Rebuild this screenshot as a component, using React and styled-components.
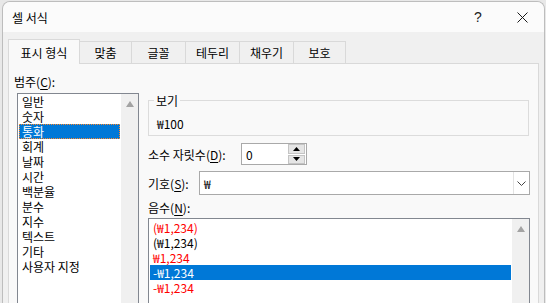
import React from 'react'
import styled, { createGlobalStyle } from 'styled-components'

const GlobalStyle = createGlobalStyle`
    html, body {
        margin: 0;
        padding: 0;
    }
    body {
        background: #e8e8e8;
        font-family: "Malgun Gothic", "Noto Sans CJK KR", sans-serif;
        font-size: 12px;
        color: #000;
        overflow: hidden;
    }
`

const Window = styled.div`
    margin: 1px 0 0 2px;
    width: 543px;
    height: 302px;
    box-sizing: border-box;
    border: 1px solid #bdbdbd;
    border-bottom: none;
    border-radius: 8px 8px 0 0;
    background: #f0f0f0;
    overflow: hidden;
    display: flex;
    flex-direction: column;
`

const TitleBar = styled.div`
    height: 30px;
    flex: none;
    display: flex;
    align-items: center;
    background: #fbfbfb;
`

const TitleText = styled.div`
    flex: 1;
    padding-left: 9px;
    line-height: 15px;
`

const TitleButton = styled.div`
    width: 44px;
    height: 30px;
    display: flex;
    align-items: center;
    justify-content: center;
    font-family: "Liberation Sans", sans-serif;
    font-size: 14px;
    color: #222;
`

const Body = styled.div`
    flex: 1;
    min-height: 0;
    display: flex;
    flex-direction: column;
    padding: 7px 5px 0 5px;
`

const TabRow = styled.div`
    display: flex;
    align-items: flex-end;
    height: 24px;
    flex: none;
    position: relative;
    z-index: 1;
`

const Tab = styled.div`
    width: ${p => p.w}px;
    height: ${p => (p.active ? 25 : 22)}px;
    margin-bottom: ${p => (p.active ? -1 : 0)}px;
    box-sizing: border-box;
    border: 1px solid #d9d9d9;
    border-bottom: none;
    border-left: ${p => (p.first ? '1px solid #d9d9d9' : 'none')};
    background: ${p => (p.active ? '#f9f9f9' : '#f0f0f0')};
    display: flex;
    align-items: center;
    justify-content: center;
    line-height: 15px;
`

const Panel = styled.div`
    flex: 1;
    min-height: 0;
    overflow: hidden;
    border: 1px solid #d9d9d9;
    border-bottom: none;
    background: #f9f9f9;
    display: flex;
    padding: 10px 0 0 5px;
`

const LeftCol = styled.div`
    width: 125px;
    display: flex;
    flex-direction: column;
`

const RightCol = styled.div`
    width: 382px;
    margin-left: 9px;
    display: flex;
    flex-direction: column;
`

const Label = styled.div`
    line-height: 15px;
    height: 15px;
    white-space: nowrap;
    width: ${p => (p.w ? `${p.w}px` : 'auto')};
    flex: none;
`

const U = styled.span`
    text-decoration: underline;
    text-underline-offset: 2px;
`

const ListBox = styled.div`
    margin-top: ${p => p.mt}px;
    margin-left: ${p => p.ml || 0}px;
    width: ${p => p.w}px;
    height: ${p => p.h}px;
    flex: none;
    box-sizing: border-box;
    border: 1px solid #828790;
    background: #fff;
    display: flex;
`

const Items = styled.div`
    flex: 1;
    padding: ${p => p.pt || 0}px 1px 0 1px;
`

const Item = styled.div`
    height: 15px;
    line-height: 15px;
    padding-left: 3px;
    box-sizing: border-box;
    white-space: nowrap;
    color: ${p => (p.selected ? '#fff' : p.red ? '#ff0000' : '#000')};
    background: ${p => (p.selected ? '#0078d7' : 'transparent')};
    outline: ${p => (p.focus ? '1px dotted #ff8728' : 'none')};
    outline-offset: -1px;
`

const ScrollBar = styled.div`
    width: 17px;
    background: #f0f0f0;
    display: flex;
    justify-content: center;
    padding-top: 7px;
    box-sizing: border-box;
`

const GroupBox = styled.fieldset`
    margin: 19px 0 0 0;
    padding: 0 8px 4px 8px;
    width: 381px;
    box-sizing: border-box;
    border: 1px solid #dcdcdc;
    min-width: 0;
`

const Legend = styled.legend`
    margin-left: -3px;
    padding: 0 2px;
    line-height: 15px;
`

const Preview = styled.div`
    margin-top: 8px;
    line-height: 15px;
`

const FieldRow = styled.div`
    display: flex;
    align-items: center;
    margin-top: ${p => p.mt}px;
`

const SpinBox = styled.div`
    width: 66px;
    height: 22px;
    box-sizing: border-box;
    border: 1px solid #a9a9a9;
    background: #fff;
    display: flex;
    align-items: center;
`

const FieldText = styled.div`
    flex: 1;
    padding-left: 4px;
    line-height: 15px;
`

const SpinButtons = styled.div`
    width: 17px;
    height: 20px;
    display: flex;
    flex-direction: column;
    gap: 1px;
    margin-right: 1px;
`

const SpinButton = styled.div`
    flex: 1;
    background: #e5e5e5;
    border: 1px solid #c4c4c4;
    display: flex;
    align-items: center;
    justify-content: center;
`

const Combo = styled.div`
    width: 331px;
    height: 24px;
    box-sizing: border-box;
    border: 1px solid #a9a9a9;
    background: #fff;
    display: flex;
    align-items: center;
`

const DropButton = styled.div`
    width: 16px;
    height: 22px;
    box-sizing: border-box;
    border-left: 1px solid #e3e3e3;
    display: flex;
    align-items: center;
    justify-content: center;
`

const ArrowUp = ({ color = '#a3a3a3', w = 8, h = 6 }) => (
    <svg width={w} height={h} viewBox={`0 0 ${w} ${h}`}>
        <polygon points={`0,${h} ${w / 2},0 ${w},${h}`} fill={color} />
    </svg>
)

const ArrowDown = ({ color = '#000', w = 6, h = 3 }) => (
    <svg width={w} height={h} viewBox={`0 0 ${w} ${h}`}>
        <polygon points={`0,0 ${w},0 ${w / 2},${h}`} fill={color} />
    </svg>
)

const categories = [
    '일반', '숫자', '통화', '회계', '날짜', '시간',
    '백분율', '분수', '지수', '텍스트', '기타', '사용자 지정'
]

const negatives = [
    { text: '(₩1,234)', red: true },
    { text: '(₩1,234)' },
    { text: '₩1,234', red: true },
    { text: '-₩1,234', selected: true },
    { text: '-₩1,234', red: true }
]

const tabs = [
    { label: '표시 형식', w: 72 },
    { label: '맞춤', w: 52 },
    { label: '글꼴', w: 54 },
    { label: '테두리', w: 54 },
    { label: '채우기', w: 54 },
    { label: '보호', w: 52 }
]

const App = () => (
    <>
        <GlobalStyle />
        <Window>
            <TitleBar>
                <TitleText>셀 서식</TitleText>
                <TitleButton>?</TitleButton>
                <TitleButton>
                    <svg width="11" height="11" viewBox="0 0 11 11">
                        <path d="M0.5 0.5 L10.5 10.5 M10.5 0.5 L0.5 10.5" stroke="#1a1a1a" strokeWidth="1" />
                    </svg>
                </TitleButton>
            </TitleBar>
            <Body>
                <TabRow>
                    {tabs.map((t, i) => (
                        <Tab key={t.label} w={t.w} active={i === 0} first={i === 0}>
                            {t.label}
                        </Tab>
                    ))}
                </TabRow>
                <Panel>
                    <LeftCol>
                        <Label>범주(<U>C</U>):</Label>
                        <ListBox mt={4} ml={3} w={122} h={230}>
                            <Items>
                                {categories.map(c => (
                                    <Item key={c} selected={c === '통화'} focus={c === '통화'}>
                                        {c}
                                    </Item>
                                ))}
                            </Items>
                            <ScrollBar>
                                <ArrowUp />
                            </ScrollBar>
                        </ListBox>
                    </LeftCol>
                    <RightCol>
                        <GroupBox>
                            <Legend>보기</Legend>
                            <Preview>₩100</Preview>
                        </GroupBox>
                        <FieldRow mt={7}>
                            <Label w={93}>소수 자릿수(<U>D</U>):</Label>
                            <SpinBox>
                                <FieldText>0</FieldText>
                                <SpinButtons>
                                    <SpinButton>
                                        <ArrowUp color="#000" w={7} h={4} />
                                    </SpinButton>
                                    <SpinButton>
                                        <ArrowDown w={7} h={4} />
                                    </SpinButton>
                                </SpinButtons>
                            </SpinBox>
                        </FieldRow>
                        <FieldRow mt={6}>
                            <Label w={51}>기호(<U>S</U>):</Label>
                            <Combo>
                                <FieldText>₩</FieldText>
                                <DropButton>
                                    <svg width="9" height="5" viewBox="0 0 9 5">
                                        <polyline points="0.5,0.5 4.5,4.5 8.5,0.5" fill="none" stroke="#444" strokeWidth="1" />
                                    </svg>
                                </DropButton>
                            </Combo>
                        </FieldRow>
                        <FieldRow mt={5}>
                            <Label>음수(<U>N</U>):</Label>
                        </FieldRow>
                        <ListBox mt={3} w={382} h={100}>
                            <Items pt={1}>
                                {negatives.map((n, i) => (
                                    <Item key={i} red={n.red} selected={n.selected}>
                                        {n.text}
                                    </Item>
                                ))}
                            </Items>
                            <ScrollBar>
                                <ArrowUp />
                            </ScrollBar>
                        </ListBox>
                    </RightCol>
                </Panel>
            </Body>
        </Window>
    </>
)

export default App
